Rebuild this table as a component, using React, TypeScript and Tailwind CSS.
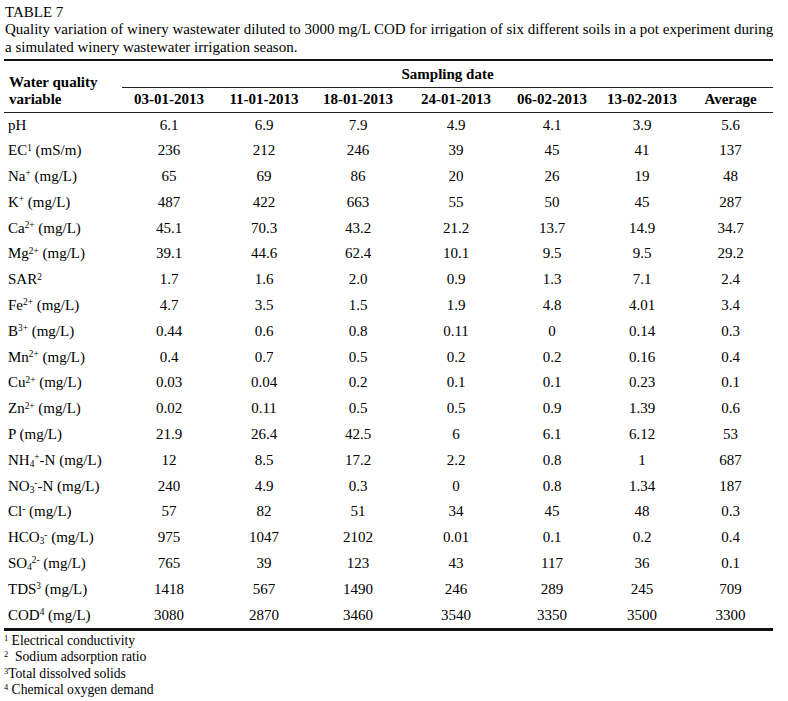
const serif = { fontFamily: '"Liberation Serif", "Times New Roman", serif' };

type Row = { label: React.ReactNode; values: string[] };

// preflight already raises sup / lowers sub; only the size is set here
const Sup = ({ children }: { children: React.ReactNode }) => <sup className="text-[0.62em]">{children}</sup>;
const Sub = ({ children }: { children: React.ReactNode }) => <sub className="text-[0.62em]">{children}</sub>;

const rows: Row[] = [
  { label: <>pH</>, values: ['6.1', '6.9', '7.9', '4.9', '4.1', '3.9', '5.6'] },
  { label: <>EC<Sup>1</Sup> (mS/m)</>, values: ['236', '212', '246', '39', '45', '41', '137'] },
  { label: <>Na<Sup>+</Sup> (mg/L)</>, values: ['65', '69', '86', '20', '26', '19', '48'] },
  { label: <>K<Sup>+</Sup> (mg/L)</>, values: ['487', '422', '663', '55', '50', '45', '287'] },
  { label: <>Ca<Sup>2+</Sup> (mg/L)</>, values: ['45.1', '70.3', '43.2', '21.2', '13.7', '14.9', '34.7'] },
  { label: <>Mg<Sup>2+</Sup> (mg/L)</>, values: ['39.1', '44.6', '62.4', '10.1', '9.5', '9.5', '29.2'] },
  { label: <>SAR<Sup>2</Sup></>, values: ['1.7', '1.6', '2.0', '0.9', '1.3', '7.1', '2.4'] },
  { label: <>Fe<Sup>2+</Sup> (mg/L)</>, values: ['4.7', '3.5', '1.5', '1.9', '4.8', '4.01', '3.4'] },
  { label: <>B<Sup>3+</Sup> (mg/L)</>, values: ['0.44', '0.6', '0.8', '0.11', '0', '0.14', '0.3'] },
  { label: <>Mn<Sup>2+</Sup> (mg/L)</>, values: ['0.4', '0.7', '0.5', '0.2', '0.2', '0.16', '0.4'] },
  { label: <>Cu<Sup>2+</Sup> (mg/L)</>, values: ['0.03', '0.04', '0.2', '0.1', '0.1', '0.23', '0.1'] },
  { label: <>Zn<Sup>2+</Sup> (mg/L)</>, values: ['0.02', '0.11', '0.5', '0.5', '0.9', '1.39', '0.6'] },
  { label: <>P (mg/L)</>, values: ['21.9', '26.4', '42.5', '6', '6.1', '6.12', '53'] },
  { label: <>NH<Sub>4</Sub><Sup>+</Sup>-N (mg/L)</>, values: ['12', '8.5', '17.2', '2.2', '0.8', '1', '687'] },
  { label: <>NO<Sub>3</Sub><Sup>-</Sup>-N (mg/L)</>, values: ['240', '4.9', '0.3', '0', '0.8', '1.34', '187'] },
  { label: <>Cl<Sup>-</Sup> (mg/L)</>, values: ['57', '82', '51', '34', '45', '48', '0.3'] },
  { label: <>HCO<Sub>3</Sub><Sup>-</Sup> (mg/L)</>, values: ['975', '1047', '2102', '0.01', '0.1', '0.2', '0.4'] },
  { label: <>SO<Sub>4</Sub><Sup>2-</Sup> (mg/L)</>, values: ['765', '39', '123', '43', '117', '36', '0.1'] },
  { label: <>TDS<Sup>3</Sup> (mg/L)</>, values: ['1418', '567', '1490', '246', '289', '245', '709'] },
  { label: <>COD<Sup>4</Sup> (mg/L)</>, values: ['3080', '2870', '3460', '3540', '3350', '3500', '3300'] },
];

const dates = ['03-01-2013', '11-01-2013', '18-01-2013', '24-01-2013', '06-02-2013', '13-02-2013', 'Average'];
const widths = [118, 94, 96, 92, 104, 88, 92, 85];

export default function App() {
  return (
    <div className="w-[788px] h-[701px] bg-white text-black overflow-hidden" style={serif}>
      <div className="pl-[5px] pt-[3.5px] text-[15px] leading-[17.5px] whitespace-nowrap">
        <div>TABLE 7</div>
        <div>
          Quality variation of winery wastewater diluted to 3000 mg/L COD for irrigation of six different soils in a pot experiment during
        </div>
        <div>a simulated winery wastewater irrigation season.</div>
      </div>

      {/* Table */}
      <div className="ml-[4px] mt-[3px] w-[769px] border-t-2 border-b-[3px] border-[#111]">
        <table className="table-fixed border-collapse text-[15px] w-[769px]">
          <colgroup>
            {widths.map((w, i) => (
              <col key={i} style={{ width: w }} />
            ))}
          </colgroup>
          <thead>
            <tr className="h-[26px]">
              <th
                rowSpan={2}
                className="align-bottom text-left font-bold leading-[17px] pl-[5px] pb-[4px] border-b border-[#222]"
              >
                Water quality
                <br />
                variable
              </th>
              <th colSpan={7} className="font-bold text-center border-b border-[#222] leading-[17px] pt-[1px]">
                Sampling date
              </th>
            </tr>
            <tr className="h-[25px]">
              {dates.map((d) => (
                <th key={d} className="font-bold text-center border-b border-[#222] leading-[17px]">
                  {d}
                </th>
              ))}
            </tr>
          </thead>
          <tbody>
            {rows.map((r, i) => (
              <tr key={i} className="h-[25.8px]">
                <td className="pl-[4px] text-left whitespace-nowrap leading-[17px]">{r.label}</td>
                {r.values.map((v, j) => (
                  <td key={j} className="text-center leading-[17px]">
                    {v}
                  </td>
                ))}
              </tr>
            ))}
          </tbody>
        </table>
      </div>

      {/* Footnotes */}
      <div className="pl-[4px] pt-[2px] text-[13.6px] leading-[16.4px] whitespace-nowrap">
        <div>
          <Sup>1</Sup> Electrical conductivity
        </div>
        <div>
          <Sup>2</Sup>&nbsp; Sodium adsorption ratio
        </div>
        <div>
          <Sup>3</Sup>Total dissolved solids
        </div>
        <div>
          <Sup>4</Sup> Chemical oxygen demand
        </div>
      </div>
    </div>
  );
}
